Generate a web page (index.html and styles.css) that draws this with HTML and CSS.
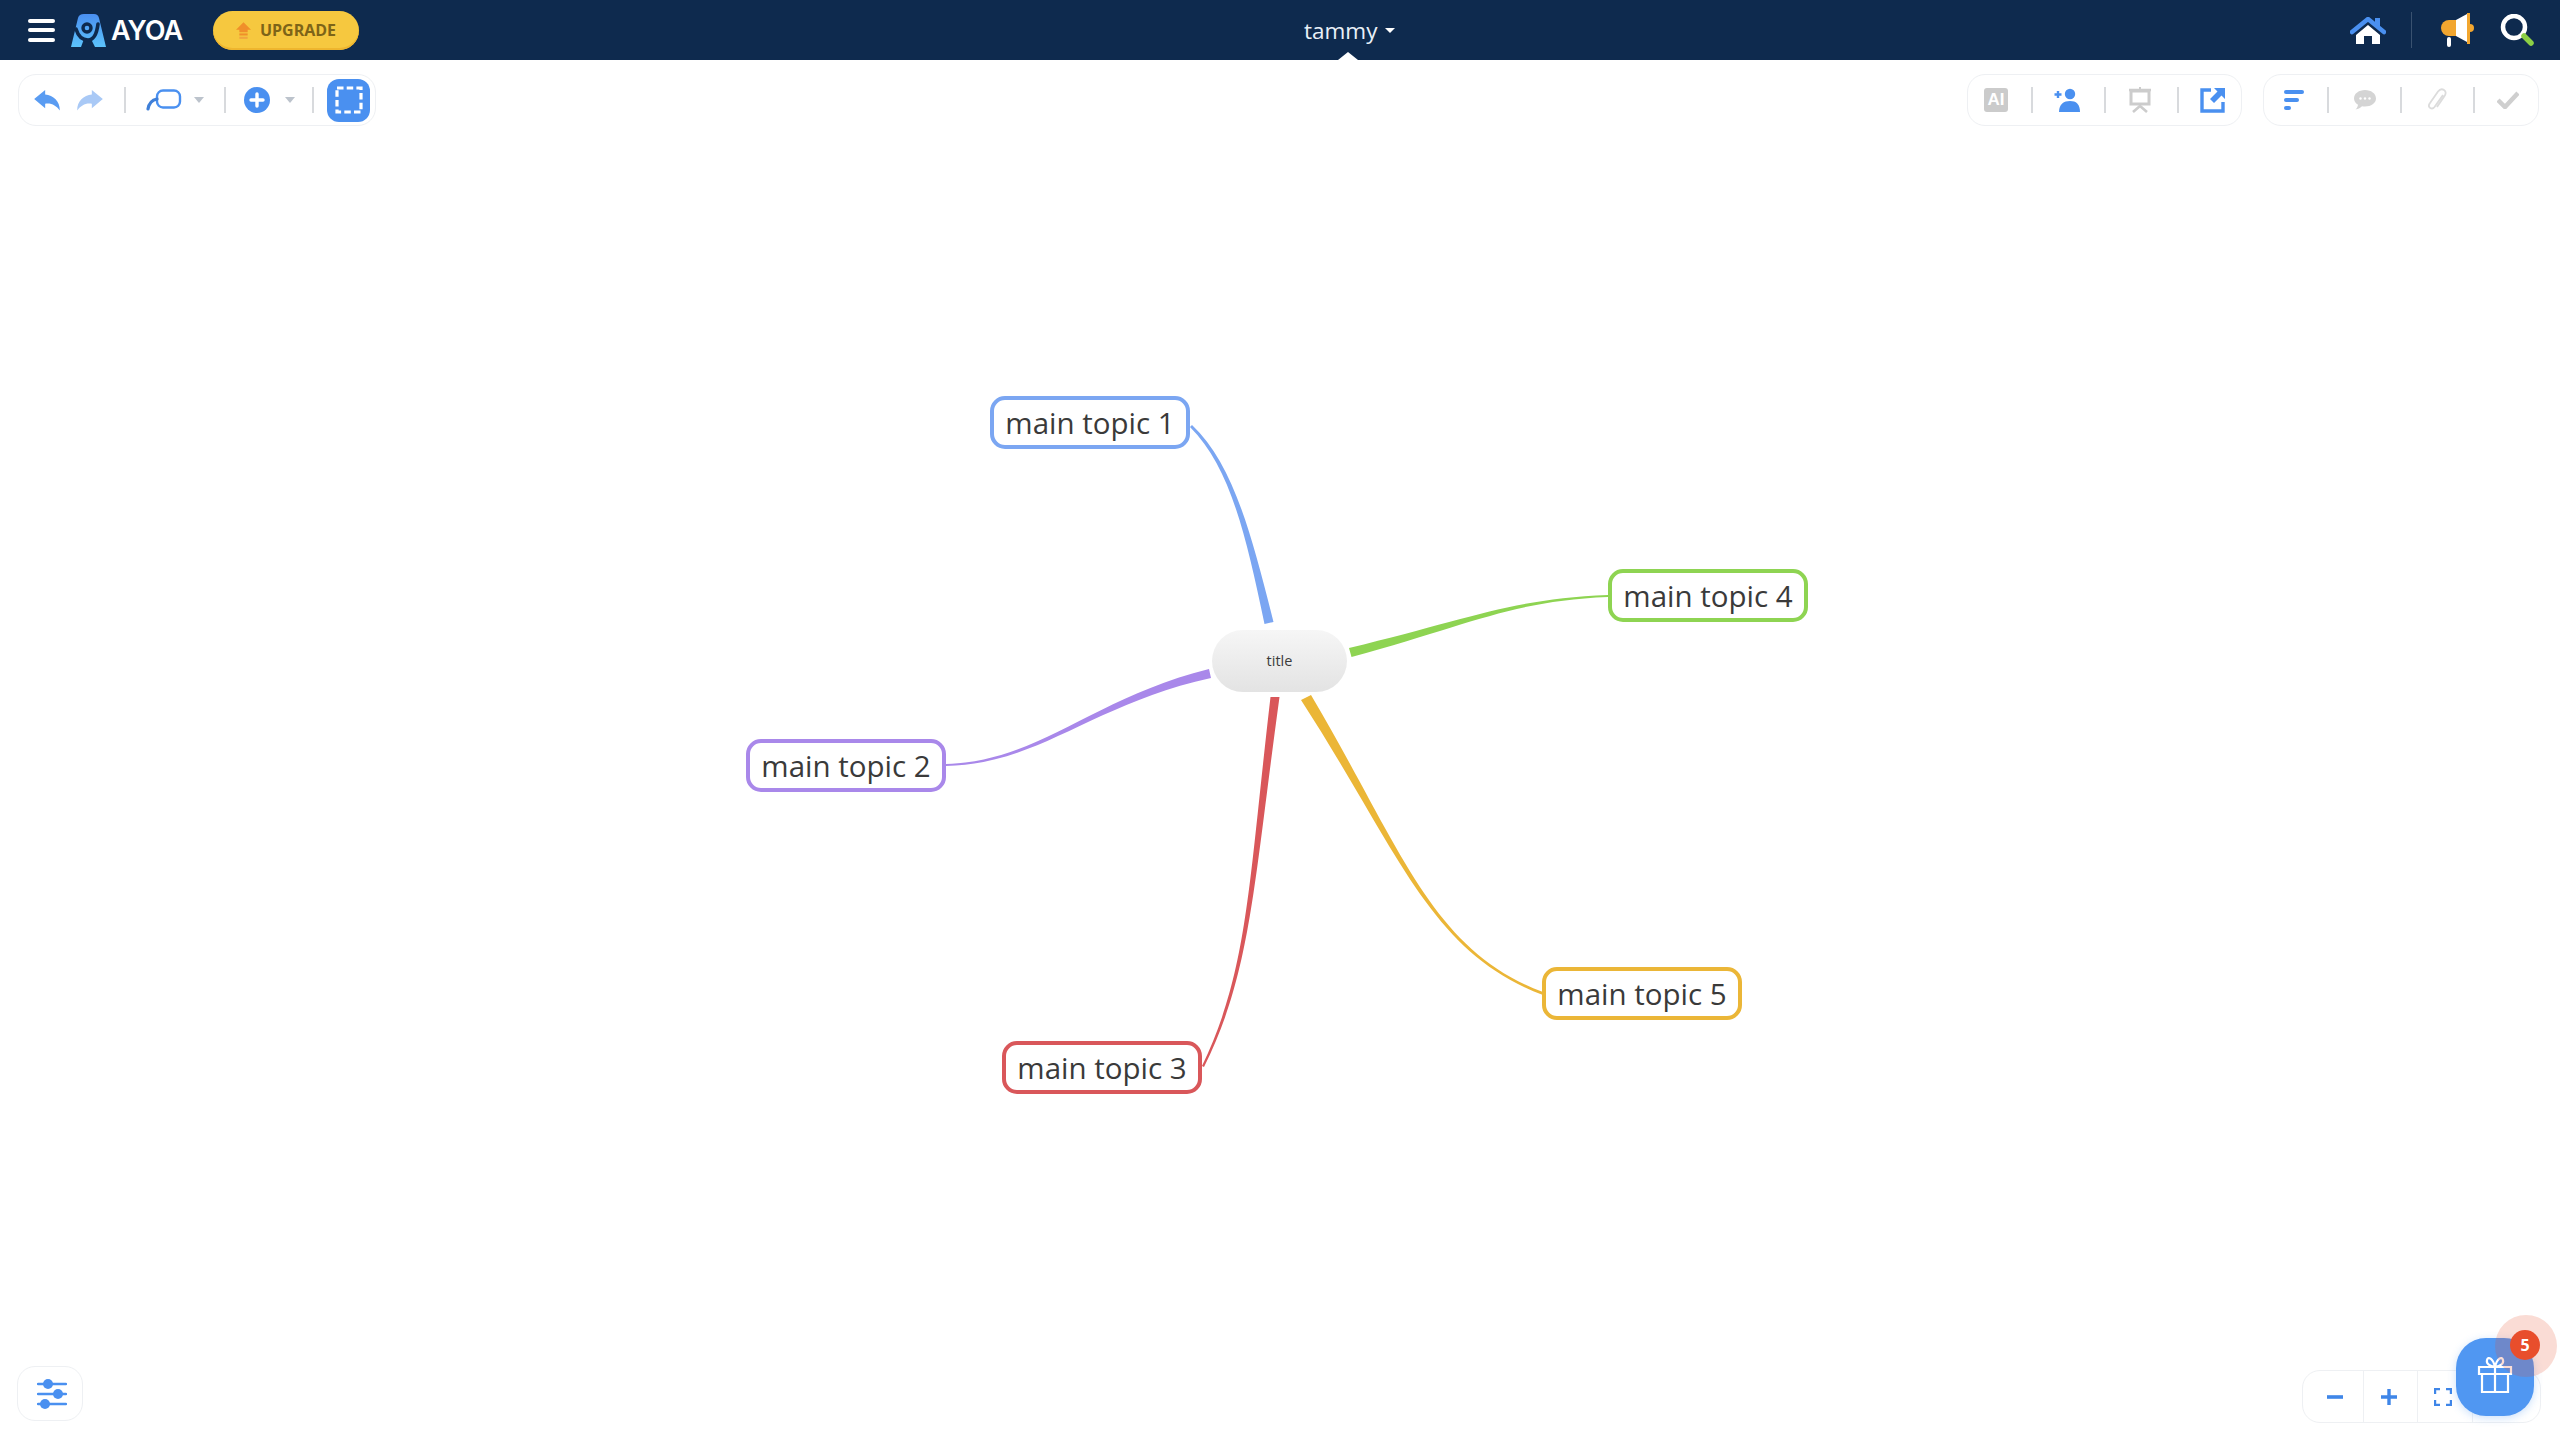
FILE: index.html
```html
<!DOCTYPE html>
<html lang="en">
<head>
<meta charset="utf-8">
<title>Ayoa - tammy</title>
<link rel="stylesheet" href="styles.css">
</head>
<body>
<div class="app">
  <header class="topbar">
    <div class="burger"><span></span><span></span><span></span></div>
    <svg class="logo" viewBox="0 0 35 33">
      <defs><linearGradient id="lg" x1="0" y1="0" x2="0" y2="1"><stop offset="0" stop-color="#4a8ff0"/><stop offset="1" stop-color="#5cc3fc"/></linearGradient></defs>
      <path d="M7 4Q8 0 13 0L23 0Q27 0 28 4L35 33L24 33L20 25L13 25L10 33L0 33Z" fill="url(#lg)"/>
      <circle cx="16" cy="14" r="4" fill="none" stroke="#0e2a4e" stroke-width="3.4"/>
      <path d="M5 15C8 25 14 26 17 26C23 26 26 18 27 10" fill="none" stroke="#0e2a4e" stroke-width="3.6" stroke-linecap="round"/>
    </svg>
    <span class="wordmark">AYOA</span>
    <button class="upgrade">
      <svg class="upgrade-icon" viewBox="0 0 18 20"><path d="M9 0L18 9H14V12H4V9H0Z" fill="#f08f2a"/><rect x="4" y="13.5" width="10" height="2.5" fill="#f08f2a"/><rect x="4" y="17.5" width="10" height="2.5" fill="#f0a540"/></svg>
      UPGRADE
    </button>
    <div class="user"><span>tammy</span><i class="user-caret"></i></div>
    <i class="notch"></i>
    <div class="top-right">
      <svg class="home" viewBox="0 0 36 27">
        <path d="M18 8L6 18V27H14V19H22V27H30V18Z" fill="#fff"/>
        <path d="M2 15L18 2L34 15" fill="none" stroke="#4a90f0" stroke-width="4.5" stroke-linecap="round" stroke-linejoin="round"/>
        <rect x="25" y="1" width="5" height="9" fill="#4a90f0"/>
      </svg>
      <i class="top-sep"></i>
      <svg class="mega" viewBox="0 0 35 34">
        <path d="M10 7H17V23H10A8 8 0 0 1 10 7Z" fill="#f2a62f"/>
        <path d="M17 7L28 1V29L17 23Z" fill="#fff"/>
        <rect x="28" y="0" width="3" height="31" fill="#f2a62f"/>
        <path d="M31 11A4 4 0 0 1 31 19Z" fill="#f2a62f"/>
        <rect x="8" y="24" width="4" height="10" rx="2" fill="#fff"/>
      </svg>
      <svg class="search" viewBox="0 0 34 32">
        <circle cx="14" cy="13" r="11" fill="none" stroke="#fff" stroke-width="4.5"/>
        <path d="M24 22L31 29" stroke="#8ccf45" stroke-width="5.5" stroke-linecap="round"/>
      </svg>
    </div>
  </header>

  <div class="toolbars">
    <div class="group group-left">
      <svg class="ic ic-undo" viewBox="0 0 30 24"><path d="M13 1L1 11L13 21V16C20 15 25 18 29 23.500C29 13 22 7 13 6Z" fill="#5a9cf2"/></svg>
      <svg class="ic ic-redo" viewBox="0 0 30 24"><path d="M17 1L29 11L17 21V16C10 15 5 18 1 23.500C1 13 8 7 17 6Z" fill="#a9c9f6"/></svg>
      <i class="sep sep-a"></i>
      <svg class="ic ic-shape" viewBox="0 0 36 24"><rect x="11" y="2.5" width="23" height="17" rx="6" fill="none" stroke="#4a90f0" stroke-width="2.4"/><path d="M2 21C3 15 6 12 11 11" fill="none" stroke="#3f7fd8" stroke-width="3.2" stroke-linecap="round"/></svg>
      <i class="caret caret-a"></i>
      <i class="sep sep-b"></i>
      <svg class="ic ic-add" viewBox="0 0 26 26"><circle cx="13" cy="13" r="13" fill="#4a90f0"/><path d="M13 7V19M7 13H19" stroke="#fff" stroke-width="3.4" stroke-linecap="round"/></svg>
      <i class="caret caret-b"></i>
      <i class="sep sep-c"></i>
      <div class="select-btn"><svg class="ic-select" viewBox="0 0 28 28"><rect x="2" y="2" width="24" height="24" fill="none" stroke="#fff" stroke-width="3.2" stroke-dasharray="6.5 3.2"/></svg></div>
    </div>
    <div class="right-groups">
      <div class="group group-share">
        <div class="cell cell-end"><span class="ai">AI</span></div>
        <div class="cell"><svg class="ic-person" viewBox="0 0 26 24"><circle cx="16" cy="6" r="5.2" fill="#4a90f0"/><path d="M5 24C5 16 10 13 16 13C22 13 26 16 26 24Z" fill="#4a90f0"/><path d="M4 3V10M0.5 6.5H7.5" stroke="#4a90f0" stroke-width="2.4"/></svg></div>
        <div class="cell"><svg class="ic-present" viewBox="0 0 24 26"><path d="M12 0V3" stroke="#ccc" stroke-width="2"/><rect x="3" y="4" width="18" height="13" fill="none" stroke="#ccc" stroke-width="3"/><path d="M1 3H23M5 25L12 19L19 25" fill="none" stroke="#ccc" stroke-width="2.6"/></svg></div>
        <div class="cell cell-last"><svg class="ic-open" viewBox="0 0 26 26"><path d="M11 3H2V24H23V15" fill="none" stroke="#4a90f0" stroke-width="3.4"/><path d="M14 1H25V12L21.500 8.500L14 16L10 12L17.500 4.500Z" fill="#4a90f0"/></svg></div>
      </div>
      <div class="group group-task">
        <div class="cell cell-end"><svg class="ic-lines" viewBox="0 0 20 22"><rect y="1" width="20" height="4" rx="2" fill="#4a90f0"/><rect y="9" width="15" height="4" rx="2" fill="#4a90f0"/><rect y="17" width="7" height="4" rx="2" fill="#4a90f0"/></svg></div>
        <div class="cell"><svg class="ic-chat" viewBox="0 0 24 22"><path d="M12 1C18 1 23 4.500 23 9.500C23 14 18 17.500 12 17.500C11 17.500 10 17.400 9 17.200C7 19 5 20 2.500 20.500C4 19 4.800 17.500 5 15.700C2.500 14.200 1 12 1 9.500C1 4.500 6 1 12 1Z" fill="#d4d4d4"/><circle cx="7.500" cy="9.500" r="1.200" fill="#fff"/><circle cx="12" cy="9.500" r="1.200" fill="#fff"/><circle cx="16.500" cy="9.500" r="1.200" fill="#fff"/></svg></div>
        <div class="cell"><svg class="ic-clip" viewBox="0 0 20 26"><path d="M16 7L7.500 19C6 21 4 20.500 3 19.800C2 19 1.500 17 3 15L11 3.500C13 1 15.500 1 17 2C18.500 3 19.500 5 17.500 8L10 19" transform="translate(-1 1)" fill="none" stroke="#dcdcdc" stroke-width="1.800"/></svg></div>
        <div class="cell cell-last"><svg class="ic-check" viewBox="0 0 22 18"><path d="M1 9L8 16L21 2" fill="none" stroke="#cfcfcf" stroke-width="4.500"/></svg></div>
      </div>
    </div>
  </div>

  <main class="canvas">
    <svg class="links" viewBox="0 0 2560 1442">
      <path d="M1190 427C1229 466 1245 530 1264.500 624L1273.500 622C1250 528 1232 463 1192 425Z" fill="#7ba6f2"/>
      <path d="M946 764C1040 761 1090 699 1209 669L1211 678C1092 704 1040 764 946 766Z" fill="#a988ea"/>
      <path d="M1202 1066C1248 970 1248 890 1270.500 697L1279.500 697C1253 890 1251 972 1204 1067Z" fill="#d9575a"/>
      <path d="M1608 595C1510 599 1470 619 1349 648L1351.500 657C1472 624 1512 601 1608 597Z" fill="#8ed452"/>
      <path d="M1543 995C1429 952 1399 851 1301 700L1311 695C1402 849 1431 950 1543 992Z" fill="#ebb637"/>
    </svg>
    <div class="title-node">title</div>
    <div class="topic t1">main topic 1</div>
    <div class="topic t2">main topic 2</div>
    <div class="topic t3">main topic 3</div>
    <div class="topic t4">main topic 4</div>
    <div class="topic t5">main topic 5</div>
  </main>

  <div class="bottombar">
    <div class="settings">
      <svg class="ic-sliders" viewBox="0 0 30 30">
        <path d="M1 5H29M1 15H29M1 25H29" stroke="#4a90f0" stroke-width="2.400" stroke-linecap="round"/>
        <circle cx="11" cy="5" r="5" fill="#4a90f0"/><circle cx="21" cy="15" r="5" fill="#4a90f0"/><circle cx="8" cy="25" r="5" fill="#4a90f0"/>
      </svg>
    </div>
    <div class="zoomer">
      <div class="zcell"><svg class="ic-z" viewBox="0 0 18 18"><path d="M1 9H17" stroke="#3f86e8" stroke-width="3.600"/></svg></div>
      <div class="zcell"><svg class="ic-z" viewBox="0 0 18 18"><path d="M1 9H17M9 1V17" stroke="#3f86e8" stroke-width="3.400"/></svg></div>
      <div class="zcell"><svg class="ic-z" viewBox="0 0 18 18"><path d="M1 6V1H6M12 1H17V6M17 12V17H12M6 17H1V12" fill="none" stroke="#3f86e8" stroke-width="2.400"/></svg></div>
      <div class="zcell"></div>
      <div class="gift">
        <svg class="ic-gift" viewBox="0 0 38 38">
          <path d="M3 12H35V19H3ZM6 19H32V37H6ZM19 12V37" fill="none" stroke="#fff" stroke-width="2.200"/>
          <path d="M19 12C14 11 10 9 11 5C12 1 17 3 19 12C21 3 26 1 27 5C28 9 24 11 19 12Z" fill="none" stroke="#fff" stroke-width="2.200"/>
        </svg>
      </div>
      <i class="pulse"></i>
      <span class="badge">5</span>
    </div>
  </div>
</div>
</body>
</html>
```
FILE: styles.css
```css
* { box-sizing: border-box; }
html, body { margin: 0; height: 100%; background: #fff; font-family: "Open Sans", "Liberation Sans", sans-serif; overflow: hidden; }
.app { position: relative; display: flex; flex-direction: column; height: 1442px; width: 2560px; }

/* header */
.topbar { position: relative; display: flex; align-items: center; height: 60px; flex: none; padding-left: 28px; background: #0e2a4e; z-index: 2; }
.burger { display: flex; flex-direction: column; justify-content: space-between; width: 27px; height: 23px; }
.burger span { display: block; height: 4px; border-radius: 2px; background: #fff; }
.logo { width: 35px; height: 33px; margin-left: 16px; }
.wordmark { margin-left: 5px; width: 72px; color: #fff; font-family: "Inter", sans-serif; font-weight: 600; font-size: 27px; letter-spacing: -1px; }
.upgrade { display: flex; align-items: center; justify-content: center; gap: 9px; width: 146px; height: 39px; margin-left: 30px; border: 0; border-radius: 20px; background: #f6c83f; box-shadow: inset 0 -2px 0 #eeb52e; color: #7d6418; font-family: "Open Sans", sans-serif; font-weight: 700; font-size: 16px; padding: 0; }
.upgrade-icon { width: 15px; height: 17px; }
.user { display: flex; align-items: center; margin-left: 945px; color: #e9f0f8; font-size: 22.500px; }
.user-caret { margin-left: 8px; border: 5px solid transparent; border-top-color: #fff; border-bottom: 0; }
.notch { position: absolute; left: 1338px; bottom: 0; border: 10px solid transparent; border-top: 0; border-bottom: 8px solid #fff; }
.top-right { display: flex; align-items: center; margin-left: auto; padding-right: 26px; }
.home { width: 36px; height: 27px; }
.top-sep { width: 1px; height: 36px; margin-left: 25px; background: #3a5270; }
.mega { width: 35px; height: 34px; margin-left: 27px; }
.search { width: 34px; height: 32px; margin-left: 26px; }

/* toolbars */
.toolbars { display: flex; justify-content: space-between; flex: none; padding: 14px 21px 0 18px; position: relative; z-index: 2; }
.group { display: flex; align-items: center; height: 52px; border: 1px solid #eef0f3; border-radius: 18px; background: #fff; }
.group-left { width: 358px; padding-left: 14px; }
.right-groups { display: flex; gap: 21px; }
.group-share { width: 275px; }
.group-task { width: 276px; }
.sep { width: 2px; height: 26px; background: #d8dadd; }
.ic { display: block; flex: none; }
.ic-undo, .ic-redo { width: 28px; height: 22px; }
.ic-redo { margin-left: 15px; }
.sep-a { margin-left: 20px; }
.ic-shape { width: 36px; height: 24px; margin-left: 20px; }
.caret { border: 5px solid transparent; border-top: 6px solid #bcc3cc; border-bottom: 0; }
.caret-a { margin-left: 12px; }
.sep-b { margin-left: 20px; }
.ic-add { width: 26px; height: 26px; margin-left: 18px; }
.caret-b { margin-left: 15px; }
.sep-c { margin-left: 17px; }
.select-btn { display: flex; align-items: center; justify-content: center; width: 43px; height: 43px; margin-left: 13px; border-radius: 12px; background: #4a90f0; }
.ic-select { width: 28px; height: 28px; }

.cell { position: relative; display: flex; align-items: center; justify-content: center; width: 73px; height: 26px; border-left: 2px solid #d8dadd; padding-right: 3px; }
.cell-end { width: 63px; border-left: 0; padding-right: 7px; }
.cell-last { width: 64px; padding-left: 6px; padding-right: 0; }
.group-task .cell { padding-right: 0; }
.group-task .cell-end { padding-right: 4px; }
.group-task .cell-last { padding-left: 4px; }
.ai { display: flex; align-items: center; justify-content: center; width: 24px; height: 24px; border-radius: 3px; background: #cbcbcb; color: #fff; font-family: "Liberation Sans", sans-serif; font-weight: 700; font-size: 17px; }
.ic-person { width: 26px; height: 24px; }
.ic-present { width: 24px; height: 26px; }
.ic-open { width: 26px; height: 26px; }
.ic-lines { width: 20px; height: 22px; }
.ic-chat { width: 24px; height: 22px; }
.ic-clip { width: 20px; height: 26px; }
.ic-check { width: 22px; height: 18px; }

/* map canvas */
.canvas { position: absolute; inset: 0; z-index: 1; }
.links { position: absolute; left: 0; top: 0; width: 2560px; height: 1442px; }
.title-node { position: absolute; left: 1212px; top: 630px; display: flex; align-items: center; justify-content: center; width: 135px; height: 62px; padding-bottom: 2px; border-radius: 31px; background: linear-gradient(#f6f6f6, #e3e3e3); color: #3c3c3c; font-size: 14.500px; }
.topic { position: absolute; display: flex; align-items: center; justify-content: center; width: 200px; height: 53px; padding-bottom: 1px; border: 4px solid; border-radius: 15px; background: #fff; color: #3a3a3a; font-size: 29.500px; white-space: nowrap; }
.t1 { left: 990px; top: 396px; border-color: #7ba6f2; }
.t2 { left: 746px; top: 739px; border-color: #a988ea; }
.t3 { left: 1002px; top: 1041px; border-color: #d9575a; }
.t4 { left: 1608px; top: 569px; border-color: #8ed452; }
.t5 { left: 1542px; top: 967px; border-color: #ebb637; }

/* bottom */
.bottombar { display: flex; justify-content: space-between; align-items: flex-start; margin-top: auto; padding: 0 19px 19px 17px; position: relative; z-index: 2; }
.settings { display: flex; align-items: center; justify-content: center; width: 66px; height: 55px; margin-bottom: 2px; padding-left: 3px; border: 1px solid #eef0f3; border-radius: 18px; background: #fff; }
.ic-sliders { width: 30px; height: 30px; }
.zoomer { position: relative; display: flex; width: 239px; height: 53px; margin-top: 4px; border: 1px solid #eef0f3; border-radius: 18px; background: #fff; }
.zcell { display: flex; align-items: center; justify-content: center; width: 54px; height: 100%; border-left: 1px solid #eef0f3; padding-right: 3px; }
.zcell:first-child { width: 60px; border-left: 0; padding-right: 0; padding-left: 4px; }
.zcell:nth-child(3) { width: 55px; padding-right: 4px; }
.zcell:nth-child(4) { flex: 1; }
.ic-z { width: 18px; height: 18px; }
.gift { position: absolute; left: 153px; top: -33px; display: flex; align-items: center; justify-content: center; width: 78px; height: 78px; padding-bottom: 6px; border-radius: 30px; background: #5097f2; box-shadow: 0 2px 8px rgba(80, 151, 242, .3); }
.ic-gift { width: 38px; height: 38px; }
.pulse { position: absolute; left: 192px; top: -56px; width: 62px; height: 62px; border-radius: 50%; background: rgba(232, 78, 44, .2); }
.badge { position: absolute; left: 207px; top: -41px; display: flex; align-items: center; justify-content: center; width: 30px; height: 30px; border-radius: 50%; background: #e84e2c; color: #fff; font-weight: 700; font-size: 16px; }
```
